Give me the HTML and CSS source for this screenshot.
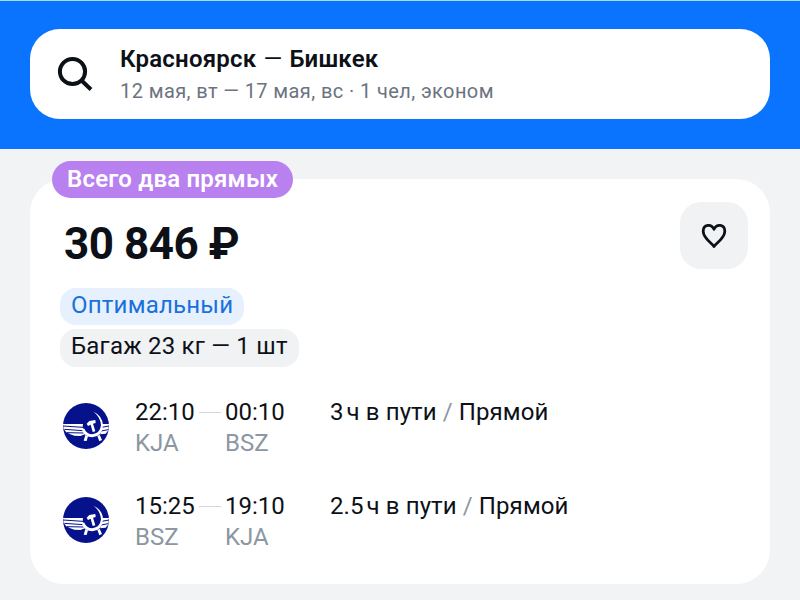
FILE: index.html
```html
<!DOCTYPE html>
<html lang="ru">
<head>
    <meta charset="UTF-8">
    <meta name="viewport" content="width=device-width, initial-scale=1.0">
    <title>Красноярск — Бишкек</title>
    <link rel="stylesheet" href="styles.css">
</head>
<body>

    <svg class="sprite" aria-hidden="true">
        <symbol id="airline" viewBox="0 0 138 138">
            <circle cx="69" cy="69" r="69" fill="#06128c"/>
            <path d="M0 63H60L63 80L66 94L52 99L34 98L22 94L10 88L2 78Z" fill="#fff"/>
            <path d="M138 63H114L112 94L128 92L136 82Z" fill="#fff"/>
            <path d="M0 69L60 73M4 79L60 83M12 89L62 90M138 69L116 73M136 80L114 84" fill="none" stroke="#06128c" stroke-width="3"/>
            <circle cx="88" cy="69" r="29" fill="#06128c"/>
            <path d="M92 26Q119 39 120 67Q118 101 88 103Q64 102 57 80L63 76Q71 94 88 94Q111 91 114 67Q113 44 92 26Z" fill="#fff"/>
            <path d="M71 62L79 54L97 51L98 60L90 62L97 85L89 87L83 65L75 69Z" fill="#fff"/>
            <path d="M67 96L75 100L71 114L62 113ZM103 99L110 95L117 111L109 115Z" fill="#fff"/>
        </symbol>
    </svg>

    <header class="header">
        <div class="search">
            <svg class="search-icon" viewBox="0 0 36 36">
                <circle cx="15.500" cy="15.500" r="12.600"/>
                <path d="M24.500 24.500L34 33.500"/>
            </svg>
            <div class="search-text">
                <div class="route">Красноярск <span class="dash">—</span> Бишкек</div>
                <div class="details">12 мая, вт — 17 мая, вс · 1 чел, эконом</div>
            </div>
        </div>
    </header>

    <main class="ticket">
        <div class="badge">Всего два прямых</div>

        <div class="ticket-top">
            <div class="price">30 846 ₽</div>
            <button class="favorite" aria-label="В избранное">
                <svg viewBox="0 0 26 26">
                    <path d="M13 23.5C11 20 2.2 15.5 2.2 8.2C2.2 1 10.5 .5 13 6.3C15.5 .5 23.8 1 23.8 8.2C23.8 15.5 15 20 13 23.5Z"/>
                </svg>
            </button>
        </div>

        <div class="tags">
            <span class="tag tag-best">Оптимальный</span>
            <span class="tag tag-baggage">Багаж 23 кг — 1 шт</span>
        </div>

        <div class="flight">
            <svg class="airline"><use href="#airline"/></svg>
            <div class="point">
                <div class="time">22:10</div>
                <div class="code">KJA</div>
            </div>
            <div class="line"></div>
            <div class="point">
                <div class="time">00:10</div>
                <div class="code">BSZ</div>
            </div>
            <div class="duration">3<span class="unit">ч</span> в пути <i>/</i> Прямой</div>
        </div>

        <div class="flight">
            <svg class="airline"><use href="#airline"/></svg>
            <div class="point">
                <div class="time">15:25</div>
                <div class="code">BSZ</div>
            </div>
            <div class="line"></div>
            <div class="point">
                <div class="time">19:10</div>
                <div class="code">KJA</div>
            </div>
            <div class="duration">2.5<span class="unit">ч</span> в пути <i>/</i> Прямой</div>
        </div>
    </main>

</body>
</html>
```
FILE: styles.css
```css
* {
    box-sizing: border-box;
}

body {
    margin: 0;
    height: 600px;
    overflow: hidden;
    background: #f2f3f5;
    font-family: Roboto, "Liberation Sans", sans-serif;
    color: #0d1117;
    white-space: nowrap;
}

.sprite {
    display: none;
}

.header {
    height: 149px;
    padding: 28px 30px 0;
    background: #0b74ff;
    border-top: 1px solid #a5dcf5;
}

.search {
    display: flex;
    height: 90px;
    padding: 15px 27px 0;
    background: #fff;
    border-radius: 30px;
}

.search-icon {
    width: 36px;
    height: 36px;
    margin: 12px 27px 0 0;
    fill: none;
    stroke: #0d1117;
    stroke-width: 4;
}

.route {
    font-size: 24px;
    font-weight: 600;
    line-height: 30px;
    letter-spacing: 0.2px;
}

.dash {
    margin: 0 1px;
    font-weight: 400;
}

.details {
    margin-top: 4px;
    font-size: 20px;
    line-height: 26px;
    letter-spacing: 0.4px;
    color: #6c7380;
}

.ticket {
    position: relative;
    height: 405px;
    margin: 30px 30px 0;
    padding: 23px 22px 0 30px;
    background: #fff;
    border-radius: 34px;
}

.badge {
    position: absolute;
    top: -18px;
    left: 22px;
    height: 37px;
    padding: 0 15px;
    background: #b981f0;
    border-radius: 19px;
    font-size: 24px;
    font-weight: 600;
    line-height: 37px;
    letter-spacing: 0.2px;
    color: #fff;
}

.ticket-top {
    display: flex;
    justify-content: space-between;
}

.price {
    padding: 16px 0 0 4px;
    font-size: 44px;
    font-weight: 700;
    line-height: 52px;
    letter-spacing: -0.5px;
}

.favorite {
    display: flex;
    align-items: center;
    justify-content: center;
    width: 68px;
    height: 67px;
    padding: 0;
    border: 0;
    border-radius: 21px;
    background: #f1f2f4;
}

.favorite svg {
    width: 26px;
    height: 26px;
    fill: none;
    stroke: #0d1117;
    stroke-width: 2.8;
    stroke-linejoin: round;
}

.tags {
    display: flex;
    flex-direction: column;
    align-items: flex-start;
    gap: 4px;
    margin-top: 18px;
}

.tag {
    height: 37px;
    padding: 0 11px;
    border-radius: 16px;
    font-size: 24px;
    line-height: 35px;
    letter-spacing: 0.22px;
}

.tag-best {
    background: #e6f1fd;
    color: #1a70dc;
}

.tag-baggage {
    height: 38px;
    background: #f0f2f4;
}

.flight {
    display: flex;
    height: 62px;
    margin-top: 29px;
}

.flight + .flight {
    margin-top: 32px;
}

.airline {
    width: 46px;
    height: 46px;
    margin: 7px 26px 0 3px;
}

.point {
    width: 60px;
    font-size: 24px;
}

.time {
    line-height: 32px;
}

.code {
    line-height: 31px;
    color: #8c97a3;
}

.line {
    width: 22px;
    height: 1px;
    margin: 16px 4px 0;
    background: #d3d6da;
}

.duration {
    margin-left: 45px;
    font-size: 24px;
    line-height: 32px;
    letter-spacing: 0.1px;
}

.unit {
    margin-left: 3px;
}

.duration i {
    font-style: normal;
    color: #8c97a3;
}
```
